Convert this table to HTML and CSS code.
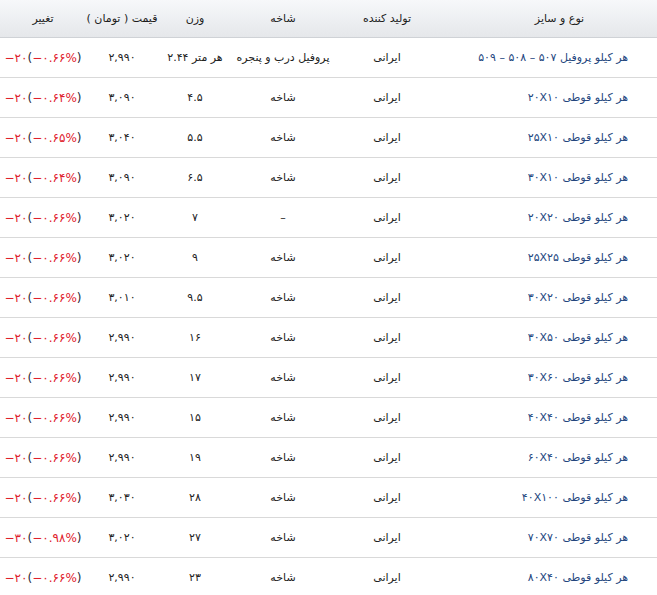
FILE: index.html
```html
<!DOCTYPE html>
<html lang="fa" dir="rtl">
<head>
<meta charset="utf-8">
<title>قیمت قوطی و پروفیل</title>
<link rel="stylesheet" href="styles.css">
</head>
<body>
<table class="prices">
  <colgroup>
    <col class="c-name"><col class="c-maker"><col class="c-type"><col class="c-weight"><col class="c-price"><col class="c-change">
  </colgroup>
  <thead>
    <tr>
      <th class="h-name">نوع و سایز</th>
      <th>تولید کننده</th>
      <th>شاخه</th>
      <th>وزن</th>
      <th>قیمت ( تومان )</th>
      <th>تغییر</th>
    </tr>
  </thead>
  <tbody>
    <tr><td class="name">هر کیلو پروفیل <span class="num wide">۵۰۷ – ۵۰۸ – ۵۰۹</span></td><td>ایرانی</td><td>پروفیل درب و پنجره</td><td>هر متر <span class="num">۲.۴۴</span></td><td class="num">۲,۹۹۰</td><td class="chg"><span class="ltr"><span class="neg">−۲۰</span>(<span class="neg">−۰.۶۶%</span>)</span></td></tr>
    <tr><td class="name">هر کیلو قوطی ۲۰X۱۰</td><td>ایرانی</td><td>شاخه</td><td class="num">۴.۵</td><td class="num">۳,۰۹۰</td><td class="chg"><span class="ltr"><span class="neg">−۲۰</span>(<span class="neg">−۰.۶۴%</span>)</span></td></tr>
    <tr><td class="name">هر کیلو قوطی ۲۵X۱۰</td><td>ایرانی</td><td>شاخه</td><td class="num">۵.۵</td><td class="num">۳,۰۴۰</td><td class="chg"><span class="ltr"><span class="neg">−۲۰</span>(<span class="neg">−۰.۶۵%</span>)</span></td></tr>
    <tr><td class="name">هر کیلو قوطی ۳۰X۱۰</td><td>ایرانی</td><td>شاخه</td><td class="num">۶.۵</td><td class="num">۳,۰۹۰</td><td class="chg"><span class="ltr"><span class="neg">−۲۰</span>(<span class="neg">−۰.۶۴%</span>)</span></td></tr>
    <tr><td class="name">هر کیلو قوطی ۲۰X۲۰</td><td>ایرانی</td><td>–</td><td class="num">۷</td><td class="num">۳,۰۲۰</td><td class="chg"><span class="ltr"><span class="neg">−۲۰</span>(<span class="neg">−۰.۶۶%</span>)</span></td></tr>
    <tr><td class="name">هر کیلو قوطی ۲۵X۲۵</td><td>ایرانی</td><td>شاخه</td><td class="num">۹</td><td class="num">۳,۰۲۰</td><td class="chg"><span class="ltr"><span class="neg">−۲۰</span>(<span class="neg">−۰.۶۶%</span>)</span></td></tr>
    <tr><td class="name">هر کیلو قوطی ۳۰X۲۰</td><td>ایرانی</td><td>شاخه</td><td class="num">۹.۵</td><td class="num">۳,۰۱۰</td><td class="chg"><span class="ltr"><span class="neg">−۲۰</span>(<span class="neg">−۰.۶۶%</span>)</span></td></tr>
    <tr><td class="name">هر کیلو قوطی ۳۰X۵۰</td><td>ایرانی</td><td>شاخه</td><td class="num">۱۶</td><td class="num">۲,۹۹۰</td><td class="chg"><span class="ltr"><span class="neg">−۲۰</span>(<span class="neg">−۰.۶۶%</span>)</span></td></tr>
    <tr><td class="name">هر کیلو قوطی ۳۰X۶۰</td><td>ایرانی</td><td>شاخه</td><td class="num">۱۷</td><td class="num">۲,۹۹۰</td><td class="chg"><span class="ltr"><span class="neg">−۲۰</span>(<span class="neg">−۰.۶۶%</span>)</span></td></tr>
    <tr><td class="name">هر کیلو قوطی ۴۰X۴۰</td><td>ایرانی</td><td>شاخه</td><td class="num">۱۵</td><td class="num">۲,۹۹۰</td><td class="chg"><span class="ltr"><span class="neg">−۲۰</span>(<span class="neg">−۰.۶۶%</span>)</span></td></tr>
    <tr><td class="name">هر کیلو قوطی ۶۰X۴۰</td><td>ایرانی</td><td>شاخه</td><td class="num">۱۹</td><td class="num">۲,۹۹۰</td><td class="chg"><span class="ltr"><span class="neg">−۲۰</span>(<span class="neg">−۰.۶۶%</span>)</span></td></tr>
    <tr><td class="name">هر کیلو قوطی ۴۰X۱۰۰</td><td>ایرانی</td><td>شاخه</td><td class="num">۲۸</td><td class="num">۳,۰۳۰</td><td class="chg"><span class="ltr"><span class="neg">−۲۰</span>(<span class="neg">−۰.۶۶%</span>)</span></td></tr>
    <tr><td class="name">هر کیلو قوطی ۷۰X۷۰</td><td>ایرانی</td><td>شاخه</td><td class="num">۲۷</td><td class="num">۳,۰۲۰</td><td class="chg"><span class="ltr"><span class="neg">−۳۰</span>(<span class="neg">−۰.۹۸%</span>)</span></td></tr>
    <tr><td class="name">هر کیلو قوطی ۸۰X۴۰</td><td>ایرانی</td><td>شاخه</td><td class="num">۲۳</td><td class="num">۲,۹۹۰</td><td class="chg"><span class="ltr"><span class="neg">−۲۰</span>(<span class="neg">−۰.۶۶%</span>)</span></td></tr>
  </tbody>
</table>
</body>
</html>
```
FILE: styles.css
```css
html, body {
  margin: 0;
  padding: 0;
  background: #ffffff;
}
body {
  font-family: "DejaVu Sans", sans-serif;
  font-size: 11px;
  color: #222222;
}
.prices {
  width: 657px;
  table-layout: fixed;
  border-collapse: collapse;
  direction: rtl;
}
.c-name { width: 217px; }
.c-maker { width: 106px; }
.c-type { width: 102px; }
.c-weight { width: 74px; }
.c-price { width: 72px; }
.c-change { width: 86px; }

.prices th {
  height: 37px;
  padding: 0;
  font-weight: normal;
  color: #1c1c1c;
  text-align: center;
  white-space: nowrap;
  background: linear-gradient(to bottom, #f7f8fa 0%, #eceef1 60%, #e5e7ea 100%);
  border-bottom: 1px solid #cfd2d6;
}
.prices th.h-name {
  padding-left: 22px;
}
.prices td {
  height: 39px;
  padding: 0;
  text-align: center;
  white-space: nowrap;
  border-bottom: 1px solid #d9d9d9;
  color: #222222;
}
.prices td.name {
  text-align: right;
  padding-right: 29px;
  color: #24467e;
}
.num {
  letter-spacing: 0.8px;
}
.num.wide {
  letter-spacing: 1.6px;
}
.prices td.chg {
  color: #1e2a3a;
  font-size: 12px;
}
.ltr {
  direction: ltr;
  unicode-bidi: isolate;
  display: inline-block;
  letter-spacing: 0.3px;
}
.neg {
  color: #e0202c;
}
```
